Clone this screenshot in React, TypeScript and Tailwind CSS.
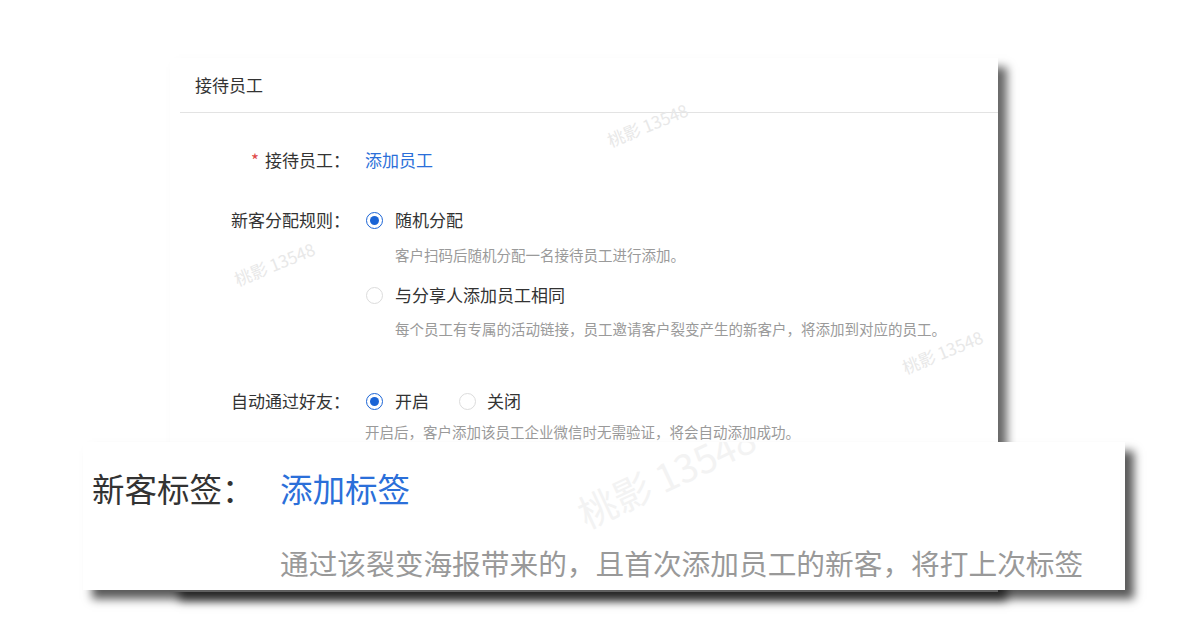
import React from 'react';

const font = { fontFamily: '"Noto Sans CJK SC", "Microsoft YaHei", sans-serif' };

function Radio({ checked }: { checked?: boolean }) {
  return (
    <span
      className={
        'flex h-[17px] w-[17px] shrink-0 items-center justify-center rounded-full border bg-white ' +
        (checked ? 'border-[#1a64d6]' : 'border-[#dcdcdc]')
      }
    >
      {checked && <span className="h-[9px] w-[9px] rounded-full bg-[#1a64d6]" />}
    </span>
  );
}

function Watermark({ className }: { className: string }) {
  return (
    <span
      className={
        'pointer-events-none absolute whitespace-nowrap select-none ' + className
      }
    >
      桃影 13548
    </span>
  );
}

export default function App() {
  return (
    <div className="relative h-[618px] w-[1190px] overflow-hidden bg-white" style={font}>
      {/* main card */}
      <div className="ml-[170px] mt-[58px] h-[534px] w-[828px] bg-white shadow-[9px_9px_9px_rgba(0,0,0,0.6)]">
        <div className="flex h-[54px] items-center pl-[25px] text-[17px] text-[#333]">接待员工</div>
        <div className="ml-[10px] h-[1px] bg-[#e3e3e3]" />

        <div className="flex flex-col pt-[35px] text-[17px] text-[#333]">
          <div className="flex h-[24px] items-center">
            <div className="flex w-[180px] justify-end">
              <span className="mr-[6px] text-[#e04848]">*</span>
              接待员工：
            </div>
            <span className="ml-[15px] text-[#2b6fd9]">添加员工</span>
          </div>

          <div className="mt-[36px] flex h-[24px] items-center">
            <div className="w-[180px] text-right">新客分配规则：</div>
            <div className="ml-[16px] flex items-center gap-[12px]">
              <Radio checked />
              <span>随机分配</span>
            </div>
          </div>
          <div className="ml-[225px] mt-[13px] flex h-[20px] items-center text-[14.5px] text-[#9a9a9a]">
            客户扫码后随机分配一名接待员工进行添加。
          </div>
          <div className="ml-[196px] mt-[18px] flex h-[24px] items-center gap-[12px]">
            <Radio />
            <span>与分享人添加员工相同</span>
          </div>
          <div className="ml-[225px] mt-[12px] flex h-[20px] items-center text-[14.5px] text-[#9a9a9a]">
            每个员工有专属的活动链接，员工邀请客户裂变产生的新客户，将添加到对应的员工。
          </div>

          <div className="mt-[50px] flex h-[24px] items-center">
            <div className="w-[180px] text-right">自动通过好友：</div>
            <div className="ml-[16px] flex items-center">
              <div className="flex items-center gap-[12px]">
                <Radio checked />
                <span>开启</span>
              </div>
              <div className="ml-[30px] flex items-center gap-[11px]">
                <Radio />
                <span>关闭</span>
              </div>
            </div>
          </div>
          <div className="ml-[195px] mt-[9px] flex h-[20px] items-center text-[14.5px] text-[#9a9a9a]">
            开启后，客户添加该员工企业微信时无需验证，将会自动添加成功。
          </div>
        </div>
      </div>

      <Watermark className="left-[605px] top-[112px] rotate-[-22deg] text-[17px] text-[#e8e8e8]" />
      <Watermark className="left-[232px] top-[251px] rotate-[-22deg] text-[17px] text-[#e8e8e8]" />
      <Watermark className="left-[900px] top-[339px] rotate-[-22deg] text-[17px] text-[#e8e8e8]" />

      {/* zoomed overlay */}
      <div className="absolute left-[83px] top-[442px] h-[148px] w-[1042px] overflow-hidden bg-white shadow-[9px_9px_9px_rgba(0,0,0,0.65)]">
        <Watermark className="left-[488px] top-[4px] rotate-[-25deg] text-[38px] text-[#f3f3f3]" />
        <div className="relative flex flex-col">
          <div className="mt-[26px] flex h-[40px] items-center">
            <div className="w-[197px] pl-[9px] text-[32.5px] text-[#333]">新客标签：</div>
            <span className="text-[32.5px] text-[#2b6fd9]">添加标签</span>
          </div>
          <div className="ml-[197px] mt-[37px] flex h-[36px] items-center text-[28.7px] text-[#999]">
            通过该裂变海报带来的，且首次添加员工的新客，将打上次标签
          </div>
        </div>
      </div>
    </div>
  );
}
